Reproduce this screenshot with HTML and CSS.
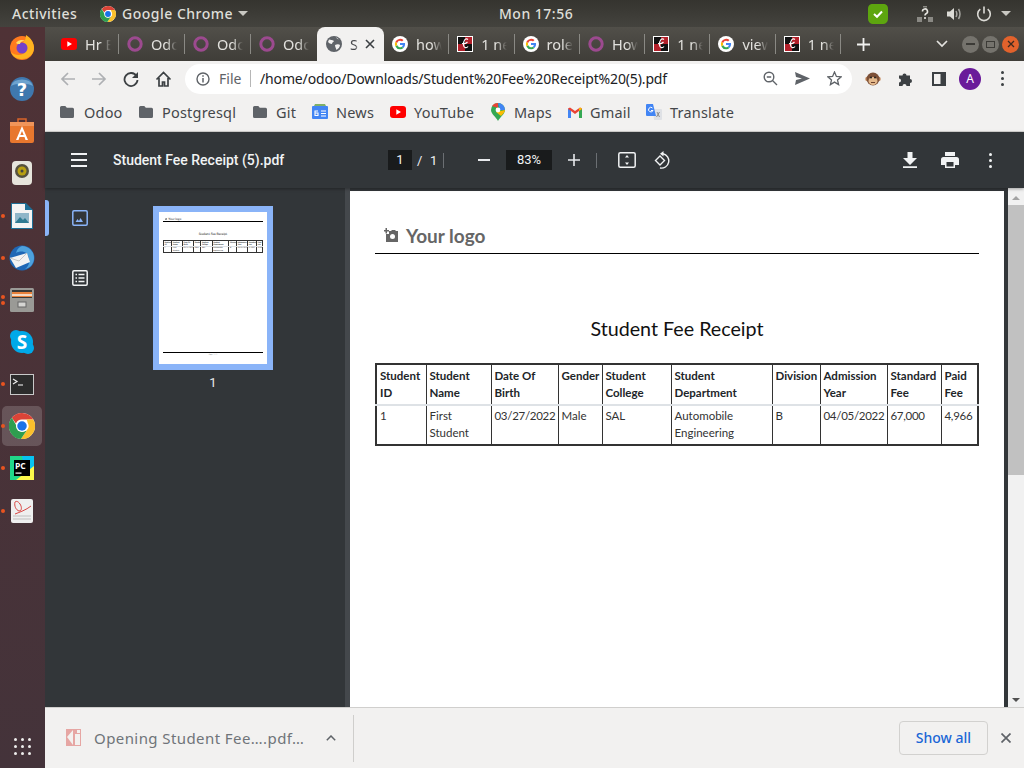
FILE: index.html
```html
<!DOCTYPE html>
<html lang="en">
<head>
<meta charset="utf-8">
<title>Student Fee Receipt (5).pdf</title>
<link rel="stylesheet" href="styles.css">
</head>
<body>
<svg class="defs" width="0" height="0" aria-hidden="true">
  <symbol id="i-chrome" viewBox="0 0 24 24">
    <circle cx="12" cy="12" r="12" fill="#fff"/>
    <path d="M12 0a12 12 0 0 1 10.4 6H12a6 6 0 0 0-5.6 3.8L2.6 4.4A12 12 0 0 1 12 0z" fill="#db4437"/>
    <path d="M22.4 6A12 12 0 0 1 11 24l5.3-7.8A6 6 0 0 0 17.2 9 6 6 0 0 0 16 6z" fill="#fbc02d"/>
    <path d="M11 24A12 12 0 0 1 2.6 4.4l5 8.6a5 5 0 0 0 6 4l2.7-.8z" fill="#2e9e4f"/>
    <circle cx="12" cy="12" r="5.6" fill="#fff"/>
    <circle cx="12" cy="12" r="4.4" fill="#1a73e8"/>
  </symbol>
  <symbol id="i-google" viewBox="0 0 24 24">
    <circle cx="12" cy="12" r="12" fill="#fff"/>
    <path d="M19.6 12.2c0-.6 0-1.100-.2-1.600H12v3h4.300a3.700 3.700 0 0 1-1.600 2.400l2.500 2a7.600 7.600 0 0 0 2.400-5.800z" fill="#4285f4"/>
    <path d="M12 20c2.100 0 3.900-.7 5.200-1.900l-2.500-2a4.700 4.700 0 0 1-7-2.500l-2.600 2A8 8 0 0 0 12 20z" fill="#34a853"/>
    <path d="M7.700 13.600a4.800 4.800 0 0 1 0-3.100l-2.600-2a8 8 0 0 0 0 7.100z" fill="#fbbc05"/>
    <path d="M12 7.200c1.200 0 2.200.4 3 1.200l2.300-2.300A8 8 0 0 0 5.100 8.500l2.600 2A4.800 4.800 0 0 1 12 7.200z" fill="#ea4335"/>
  </symbol>
  <symbol id="i-ring" viewBox="0 0 16 16">
    <circle cx="8" cy="8" r="6.200" fill="none" stroke="#9c4a8f" stroke-width="3"/>
  </symbol>
  <symbol id="i-e" viewBox="0 0 16 16">
    <rect width="16" height="16" fill="#fff"/>
    <rect x="1" y="1" width="7" height="7" fill="#111"/>
    <rect x="8" y="1" width="7" height="7" fill="#b3202a"/>
    <rect x="1" y="8" width="7" height="7" fill="#b3202a"/>
    <rect x="8" y="8" width="7" height="7" fill="#111"/>
    <path d="M11 3.500C8.500 1.500 6 5 6.500 9c.3 3 3 3.500 4.500 1.500M5 7.500c2 .5 4 0 5.500-1.500" fill="none" stroke="#fff" stroke-width="1.200"/>
  </symbol>
  <symbol id="i-folder" viewBox="0 0 14 12">
    <path d="M0 1.500A1.500 1.500 0 0 1 1.500 0h3.800l1.500 1.700h5.700A1.500 1.500 0 0 1 14 3.200v7.300a1.500 1.500 0 0 1-1.500 1.500h-11A1.500 1.500 0 0 1 0 10.500z" fill="#5f6368"/>
  </symbol>
  <symbol id="i-yt" viewBox="0 0 16 12">
    <rect width="16" height="12" rx="3" fill="#f00"/>
    <path d="M6.300 3.300 11 6l-4.700 2.700z" fill="#fff"/>
  </symbol>
  <symbol id="i-camera" viewBox="0 0 15 15">
    <path d="M3 0v2h2v1.500H3v2H1.500v-2H0V2h1.500V0z" fill="#666"/>
    <path d="M5 3h2l1-1h3l1 1h2v11H2V6h3z" fill="#666"/>
    <circle cx="8.500" cy="8.500" r="2.500" fill="#fff"/>
  </symbol>
</svg>

<header class="topbar">
  <span class="top-item activities">Activities</span>
  <svg class="top-chrome" width="16" height="16"><use href="#i-chrome"/></svg>
  <span class="top-item top-app">Google Chrome</span>
  <span class="caret"></span>
  <span class="top-item clock">Mon 17:56</span>
  <svg class="tray-check" width="22" height="22" viewBox="0 0 22 22">
    <path d="M6 1h10c3.500 0 5 1.500 5 5v9c0 4-2 6-6 6H7c-4 0-6-2-6-6V6c0-3.500 1.500-5 5-5z" fill="#5da50f"/>
    <path d="m7 11 3 2.800 5-5.300" fill="none" stroke="#fff" stroke-width="2"/>
  </svg>
  <svg class="tray-net" width="16" height="16" viewBox="0 0 16 16">
    <path d="M6 0h4v1.500H6zM0 11h5v5H0zM11 11h5v5h-5z" fill="#8a8984"/>
    <path d="M5.500 5.500A2.500 2.500 0 1 1 9 7.700c-.7.400-1 .8-1 1.800M8 11v2" fill="none" stroke="#e9e8e3" stroke-width="1.600"/>
  </svg>
  <svg class="tray-vol" width="16" height="16" viewBox="0 0 16 16">
    <path d="M1 5.500h3L8 2v12l-4-3.500H1z" fill="#dcdbd6"/>
    <path d="M10 5c1 1.800 1 4.200 0 6M12.500 3c1.800 3 1.800 7 0 10" fill="none" stroke="#a5a49f" stroke-width="1.500"/>
  </svg>
  <svg class="tray-power" width="16" height="16" viewBox="0 0 16 16">
    <path d="M4.300 3.200a6.300 6.300 0 1 0 7.400 0M8 .5v7" fill="none" stroke="#dcdbd6" stroke-width="1.600"/>
  </svg>
  <span class="caret caret-end"></span>
</header>

<div class="desktop">
  <nav class="dock">
    <div class="dock-item">
      <svg width="26" height="26" viewBox="0 0 26 26">
        <circle cx="13" cy="14" r="12" fill="#ff7a1f"/>
        <path d="M17 1c5 3 8 8 8 13 0 6-5 11-12 11-5 0-9-2-11-7 4 4 12 4 15-1 1-3 0-6-3-8 2-2 3-5 3-8z" fill="#ffb420"/>
        <circle cx="13" cy="14" r="5.500" fill="#7542c9"/>
        <path d="M7 9c2-3 6-4 9-2-3 0-5 1-5 3-2 0-3 0-4-1z" fill="#ffdf6a"/>
      </svg>
    </div>
    <div class="dock-item">
      <svg width="26" height="26" viewBox="0 0 26 26">
        <circle cx="13" cy="13" r="12" fill="#3f78ae"/>
        <path d="M2 10a11.500 9 0 0 1 22 0c-5-3-17-3-22 0z" fill="#6ea3cf"/>
        <text x="13" y="20" class="help-mark">?</text>
      </svg>
    </div>
    <div class="dock-item">
      <svg width="26" height="26" viewBox="0 0 26 26">
        <path d="M9 4V1h8v3" fill="none" stroke="#d9642a" stroke-width="1.500"/>
        <rect x="1" y="4" width="24" height="21" rx="2" fill="#e8772e"/>
        <rect x="1" y="4" width="24" height="4" fill="#f0955a"/>
        <path d="M13 8 7 22h2.500l1-3h5l1 3H19zm0 5 1.700 4h-3.400z" fill="#fff"/>
      </svg>
    </div>
    <div class="dock-item">
      <svg width="24" height="26" viewBox="0 0 24 26">
        <rect x="2" y="1" width="20" height="24" rx="4" fill="#e6e4dc"/>
        <circle cx="12" cy="11" r="7" fill="#55513f"/>
        <circle cx="12" cy="11" r="4.500" fill="#b89f12"/>
        <circle cx="12" cy="11" r="1.500" fill="#444"/>
      </svg>
    </div>
    <div class="dock-item has-dot">
      <svg width="22" height="26" viewBox="0 0 22 26">
        <path d="M0 0h15l7 7v19H0z" fill="#1e6f96"/>
        <path d="M1 1h13v6h7v18H1z" fill="#f4f4f4"/>
        <rect x="4" y="10" width="14" height="10" fill="#8fb6c9"/>
        <path d="m4 20 5-6 3 3 2-2 4 5z" fill="#2f7a92"/>
      </svg>
    </div>
    <div class="dock-item has-dot">
      <svg width="26" height="26" viewBox="0 0 26 26">
        <circle cx="13" cy="13" r="12.500" fill="#1f67b5"/>
        <path d="M13 1a12 12 0 0 1 12 12c0 6-4 10-9 11 5-3 6-11 1-16-2-2-7-2-10 0 1-4 3-6 6-7z" fill="#4ea1dc"/>
        <path d="m1 13 17-5 3 9-14 6z" fill="#f3f3f3"/>
        <path d="m1 13 9 3 8-8" fill="none" stroke="#c6c6c6"/>
      </svg>
    </div>
    <div class="dock-item has-dots">
      <svg width="24" height="26" viewBox="0 0 24 26">
        <rect x="0" y="1" width="24" height="24" rx="1.500" fill="#9a9a96"/>
        <rect x="2" y="3" width="20" height="8" fill="#3a3a38"/>
        <rect x="2" y="5" width="20" height="5" fill="#e8813b"/>
        <rect x="2" y="7" width="20" height="2" fill="#f5d9c2"/>
        <rect x="8" y="15" width="8" height="5" fill="#d5d5d2" stroke="#666"/>
      </svg>
    </div>
    <div class="dock-item">
      <svg width="26" height="26" viewBox="0 0 26 26">
        <circle cx="13" cy="13" r="11" fill="#00a9e8"/>
        <circle cx="7" cy="7" r="6" fill="#00a9e8"/>
        <circle cx="19" cy="19" r="6" fill="#00a9e8"/>
        <text x="13" y="20" class="skype-mark">S</text>
      </svg>
    </div>
    <div class="dock-item has-dot">
      <svg width="24" height="21" viewBox="0 0 24 21">
        <rect x=".5" y=".5" width="23" height="20" fill="#2c2c2c" stroke="#c9c9c9"/>
        <path d="m3 5 4 2.500L3 10" fill="none" stroke="#eee" stroke-width="1.200"/>
        <path d="M8 11h5" stroke="#ddd" stroke-width="1.200"/>
      </svg>
    </div>
    <div class="dock-item has-dot is-active">
      <svg width="26" height="26"><use href="#i-chrome"/></svg>
    </div>
    <div class="dock-item has-dot">
      <svg width="24" height="24" viewBox="0 0 24 24">
        <path d="M0 0h24v24H0z" fill="#21d789"/>
        <path d="M12 0h12v24H16z" fill="#07c3f2"/>
        <path d="M24 10v14H6z" fill="#fcf84a"/>
        <rect x="4" y="4" width="16" height="16" fill="#000"/>
        <text x="5" y="13" class="pc-mark">PC</text>
        <rect x="5.500" y="16.500" width="6" height="1.200" fill="#fff"/>
      </svg>
    </div>
    <div class="dock-item has-dot">
      <svg width="22" height="24" viewBox="0 0 22 24">
        <rect width="22" height="24" rx="2" fill="#efefef"/>
        <path d="M4 3c-1 4 1 8 4 9 3 0 3-4 1-7C7 2 5 2 4 3zM4 15c5-2 11-4 16-8" fill="none" stroke="#d5322f" stroke-width=".9"/>
        <path d="M2 17h18M2 20h18" stroke="#d0d0d0" stroke-width="1.500"/>
      </svg>
    </div>
    <div class="dock-apps">
      <span></span><span></span><span></span><span></span><span></span><span></span><span></span><span></span><span></span>
    </div>
  </nav>

  <div class="window">
    <div class="tabstrip">
      <div class="tab"><svg width="16" height="12"><use href="#i-yt"/></svg><span class="tab-title">Hr Ex</span></div>
      <div class="tab"><svg width="16" height="16"><use href="#i-ring"/></svg><span class="tab-title">Odoo</span></div>
      <div class="tab"><svg width="16" height="16"><use href="#i-ring"/></svg><span class="tab-title">Odoo</span></div>
      <div class="tab no-sep"><svg width="16" height="16"><use href="#i-ring"/></svg><span class="tab-title">Odoo</span></div>
      <div class="tab tab-active">
        <svg width="16" height="16" viewBox="0 0 16 16">
          <circle cx="8" cy="8" r="8" fill="#5f6368"/>
          <path d="M3 3.500c2 .5 3 0 5 1.500-.5 1.500-2 1-2 3-1.500 0-3-1-4-2zM10 1c1 1.500 1 2 3 2.500M9 9c2-1 4-1 5 0 0 2-2 4-3.500 5C10 12 9 11 9 9z" fill="#f2f1f0"/>
        </svg>
        <span class="tab-title tab-title-active">St</span>
        <svg class="tab-close" width="10" height="10" viewBox="0 0 10 10"><path d="m1 1 8 8M9 1 1 9" stroke="#3c4043" stroke-width="1.600"/></svg>
      </div>
      <div class="tab"><svg width="16" height="16"><use href="#i-google"/></svg><span class="tab-title">how t</span></div>
      <div class="tab"><svg width="16" height="16"><use href="#i-e"/></svg><span class="tab-title">1 new</span></div>
      <div class="tab"><svg width="16" height="16"><use href="#i-google"/></svg><span class="tab-title">role b</span></div>
      <div class="tab"><svg width="16" height="16"><use href="#i-ring"/></svg><span class="tab-title">How t</span></div>
      <div class="tab"><svg width="16" height="16"><use href="#i-e"/></svg><span class="tab-title">1 new</span></div>
      <div class="tab"><svg width="16" height="16"><use href="#i-google"/></svg><span class="tab-title">view</span></div>
      <div class="tab"><svg width="16" height="16"><use href="#i-e"/></svg><span class="tab-title">1 new</span></div>
      <svg class="new-tab" width="13" height="13" viewBox="0 0 13 13"><path d="M6.500 0v13M0 6.500h13" stroke="#f1f1ef" stroke-width="1.800"/></svg>
      <svg class="tab-list" width="12" height="8" viewBox="0 0 12 8"><path d="m1 1 5 5 5-5" fill="none" stroke="#e4e3df" stroke-width="1.700"/></svg>
      <div class="win-buttons">
        <span class="win-btn"><i class="win-min"></i></span>
        <span class="win-btn"><i class="win-max"></i></span>
        <span class="win-btn win-close">
          <svg width="8" height="8" viewBox="0 0 8 8"><path d="m1 1 6 6M7 1 1 7" stroke="#3c2a20" stroke-width="1.300"/></svg>
        </span>
      </div>
    </div>

    <div class="toolbar">
      <svg class="nav-btn" width="16" height="16" viewBox="0 0 16 16"><path d="M15 8H2M8 2 2 8l6 6" fill="none" stroke="#aeb0b3" stroke-width="1.700"/></svg>
      <svg class="nav-btn" width="16" height="16" viewBox="0 0 16 16"><path d="M1 8h13M8 2l6 6-6 6" fill="none" stroke="#aeb0b3" stroke-width="1.700"/></svg>
      <svg class="nav-btn" width="16" height="16" viewBox="0 0 16 16"><path d="M13.500 5A6.500 6.500 0 1 0 14.500 9" fill="none" stroke="#3c4043" stroke-width="1.800"/><path d="M15 1v6H9z" fill="#3c4043"/></svg>
      <svg class="nav-btn" width="17" height="16" viewBox="0 0 17 16"><path d="M1.500 8.500 8.500 1.500l7 7M4 7v8h3.500v-4h2v4H13V7" fill="none" stroke="#3c4043" stroke-width="1.700"/></svg>
      <div class="omnibox">
        <svg class="omni-info" width="14" height="14" viewBox="0 0 14 14"><circle cx="7" cy="7" r="6" fill="none" stroke="#5f6368" stroke-width="1.400"/><path d="M7 6v4.500M7 3.300v1.500" stroke="#5f6368" stroke-width="1.500"/></svg>
        <span class="omni-scheme">File</span>
        <span class="omni-sep"></span>
        <span class="omni-url">/home/odoo/Downloads/Student%20Fee%20Receipt%20(5).pdf</span>
        <svg class="omni-zoom" width="15" height="15" viewBox="0 0 15 15"><circle cx="6" cy="6" r="4.800" fill="none" stroke="#5f6368" stroke-width="1.400"/><path d="m9.500 9.500 4.500 4.500M3.800 6h4.400" stroke="#5f6368" stroke-width="1.400"/></svg>
        <svg class="omni-send" width="15" height="13" viewBox="0 0 15 13"><path d="M0 0 15 6.500 0 13l1-5 6-1.500L1 5z" fill="#5f6368"/></svg>
        <svg class="omni-star" width="15" height="15" viewBox="0 0 15 15"><path d="m7.500 1 1.900 4.400 4.700.4-3.600 3.100 1.100 4.700-4.100-2.500-4.100 2.500 1.100-4.700L.9 5.800l4.700-.4z" fill="none" stroke="#5f6368" stroke-width="1.300"/></svg>
      </div>
      <svg class="ext-monkey" width="16" height="16" viewBox="0 0 16 16">
        <circle cx="2.500" cy="8" r="2.300" fill="#c98f62"/><circle cx="13.500" cy="8" r="2.300" fill="#c98f62"/>
        <circle cx="8" cy="8" r="6.500" fill="#7c5038"/>
        <ellipse cx="8" cy="10" rx="4.500" ry="4" fill="#e3b88b"/>
        <circle cx="6" cy="6.500" r="1" fill="#222"/><circle cx="10" cy="6.500" r="1" fill="#222"/>
        <path d="M6 11.500h4" stroke="#6b412c"/>
      </svg>
      <svg class="ext-puzzle" width="16" height="16" viewBox="0 0 16 16"><path d="M1 4.500h3.500a2 2 0 1 1 4 0H12V8a2 2 0 1 1 0 4v3H8.500a2 2 0 1 0-4 0H1v-3.500a2 2 0 1 0 0-4z" fill="#3c4043"/></svg>
      <svg class="ext-side" width="14" height="14" viewBox="0 0 14 14"><path d="M0 0h14v14H0z" fill="#3c4043"/><rect x="2" y="2" width="6.500" height="10" fill="#f2f1f0"/></svg>
      <span class="avatar">A</span>
      <span class="menu-dots"><i></i><i></i><i></i></span>
    </div>

    <div class="bookmarks">
      <span class="bm bm-odoo"><svg width="14" height="12"><use href="#i-folder"/></svg>Odoo</span>
      <span class="bm bm-pg"><svg width="14" height="12"><use href="#i-folder"/></svg>Postgresql</span>
      <span class="bm bm-git"><svg width="14" height="12"><use href="#i-folder"/></svg>Git</span>
      <span class="bm bm-news">
        <svg width="16" height="16" viewBox="0 0 16 16"><rect y="2" width="16" height="13" rx="1" fill="#4285f4"/><path d="M2 2 3 0h10l1 2z" fill="#7fb069"/><path d="M9 7h5M9 9.500h5M9 12h5M3 9h3v2.500H3V7h3" fill="none" stroke="#fff" stroke-width="1.100"/></svg>News</span>
      <span class="bm bm-yt"><svg width="16" height="12"><use href="#i-yt"/></svg>YouTube</span>
      <span class="bm bm-maps">
        <svg width="14" height="18" viewBox="0 0 14 18"><path d="M7 0a7 7 0 0 1 7 7c0 4-5 7-7 11-2-4-7-7-7-11a7 7 0 0 1 7-7z" fill="#34a853"/><path d="M1 3a7 7 0 0 1 6-3v5z" fill="#ea4335"/><path d="M7 0a7 7 0 0 1 7 7H9z" fill="#4285f4"/><path d="M14 7c0 2-2 4-4 6L5 9z" fill="#fbbc04"/><circle cx="7" cy="7" r="2.400" fill="#fff"/></svg>Maps</span>
      <span class="bm bm-gmail">
        <svg width="14" height="11" viewBox="0 0 14 11"><path d="M0 1.500V11h3V4l4 3 4-3v7h3V1.500L12 .5 7 4 2 .5z" fill="#ea4335"/><path d="M0 2v9h3V4z" fill="#4285f4"/><path d="M14 2v9h-3V4z" fill="#34a853"/><path d="m11 1.500 1.500-1L14 2l-3 2z" fill="#fbbc04"/></svg>Gmail</span>
      <span class="bm bm-tr">
        <svg width="16" height="16" viewBox="0 0 16 16"><path d="M7 5h8a1 1 0 0 1 1 1v9a1 1 0 0 1-1 1H8z" fill="#dfe1e5"/><path d="M1 0h6l3 12H1a1 1 0 0 1-1-1V1a1 1 0 0 1 1-1z" fill="#4285f4"/><path d="M6.500 4a2.300 2.300 0 1 0 .5 2.500H5" fill="none" stroke="#fff"/><path d="m11 8 2.500 5M13.500 8l-3 5" stroke="#777" stroke-width=".8"/></svg>Translate</span>
    </div>

    <div class="viewer">
      <div class="pdf-bar">
        <div class="pdf-left">
          <span class="hamburger"><i></i><i></i><i></i></span>
          <span class="pdf-title">Student Fee Receipt (5).pdf</span>
        </div>
        <span class="page-input">1</span>
        <span class="page-slash">/</span>
        <span class="page-total">1</span>
        <span class="pdf-sep"></span>
        <svg class="pdf-minus" width="12" height="2" viewBox="0 0 12 2"><rect width="12" height="2" fill="#e8eaed"/></svg>
        <span class="zoom-input">83%</span>
        <svg class="pdf-plus" width="12" height="12" viewBox="0 0 12 12"><path d="M6 0v12M0 6h12" stroke="#e8eaed" stroke-width="1.600"/></svg>
        <span class="pdf-sep pdf-sep-2"></span>
        <svg class="pdf-fit" width="18" height="16" viewBox="0 0 18 16"><rect x=".8" y=".8" width="16.400" height="14.400" rx="1.500" fill="none" stroke="#f1f3f4" stroke-width="1.500"/><path d="m9 3 2 2.500H7zM9 13l-2-2.500h4z" fill="#f1f3f4"/></svg>
        <svg class="pdf-rotate" width="18" height="18" viewBox="0 0 18 18"><path d="m1.500 9.500 4.500-4.500 4.500 4.500-4.500 4.500z" fill="none" stroke="#f1f3f4" stroke-width="1.400"/><path d="M6 17a7.200 7.200 0 1 0 3-14.200H7.500" fill="none" stroke="#f1f3f4" stroke-width="1.400"/><path d="M9.500 0 6 2.800l3.500 2.800z" fill="#f1f3f4"/></svg>
        <svg class="pdf-download" width="14" height="16" viewBox="0 0 14 16"><path d="M4.500 0h5v6H14l-7 7-7-7h4.500zM0 14.300h14V16H0z" fill="#f1f3f4"/></svg>
        <svg class="pdf-print" width="18" height="16" viewBox="0 0 18 16"><path d="M4 0h10v4H4zM2.500 5h13A2.500 2.500 0 0 1 18 7.500V13h-4v3H4v-3H0V7.500A2.500 2.500 0 0 1 2.500 5z" fill="#f1f3f4"/><rect x="5.500" y="10" width="7" height="4.500" fill="#323639"/></svg>
        <span class="menu-dots menu-dots-light"><i></i><i></i><i></i></span>
      </div>
      <div class="pdf-body">
        <aside class="sidebar">
          <div class="side-tabs">
            <span class="side-indicator"></span>
            <svg class="side-thumb-icon" width="16" height="16" viewBox="0 0 16 16"><rect x=".8" y=".8" width="14.400" height="14.400" rx="1.200" fill="none" stroke="#8ab4f8" stroke-width="1.500"/><path d="m3.500 12 2-3 1.500 2 1.500-3 2.500 4z" fill="#8ab4f8"/></svg>
            <svg class="side-list-icon" width="16" height="16" viewBox="0 0 16 16"><rect x=".8" y=".8" width="14.400" height="14.400" rx="1.200" fill="none" stroke="#f1f3f4" stroke-width="1.500"/><path d="M6.500 4.500h6M6.500 8h6M6.500 11.500h6M3.500 4.500h1.500M3.500 8h1.500M3.500 11.500h1.500" stroke="#f1f3f4" stroke-width="1.500"/></svg>
          </div>
          <div class="thumbs">
            <div class="thumb-frame">
              <div class="sheet sheet-mini">
                <div class="sheet-logo"><svg width="15" height="15"><use href="#i-camera"/></svg><span>Your logo</span></div>
                <h1 class="sheet-title">Student Fee Receipt</h1>
                <table class="fee-table">
                  <colgroup><col class="c1"><col class="c2"><col class="c3"><col class="c4"><col class="c5"><col class="c6"><col class="c7"><col class="c8"><col class="c9"><col class="c10"></colgroup>
                  <thead><tr><th>Student<br>ID</th><th>Student<br>Name</th><th>Date Of<br>Birth</th><th>Gender</th><th>Student<br>College</th><th>Student<br>Department</th><th>Division</th><th>Admission<br>Year</th><th>Standard<br>Fee</th><th>Paid<br>Fee</th></tr></thead>
                  <tbody><tr><td>1</td><td>First<br>Student</td><td class="num">03/27/2022</td><td>Male</td><td>SAL</td><td>Automobile<br>Engineering</td><td>B</td><td class="num">04/05/2022</td><td class="num">67,000</td><td class="num">4,966</td></tr></tbody>
                </table>
                <div class="sheet-foot">Page: 1 / 1</div>
              </div>
            </div>
            <span class="thumb-num">1</span>
          </div>
        </aside>
        <span class="side-rule"></span>
        <main class="doc-area">
          <div class="sheet">
            <div class="sheet-logo"><svg width="15" height="15"><use href="#i-camera"/></svg><span>Your logo</span></div>
            <h1 class="sheet-title">Student Fee Receipt</h1>
            <table class="fee-table">
              <colgroup><col class="c1"><col class="c2"><col class="c3"><col class="c4"><col class="c5"><col class="c6"><col class="c7"><col class="c8"><col class="c9"><col class="c10"></colgroup>
              <thead><tr><th>Student<br>ID</th><th>Student<br>Name</th><th>Date Of<br>Birth</th><th>Gender</th><th>Student<br>College</th><th>Student<br>Department</th><th>Division</th><th>Admission<br>Year</th><th>Standard<br>Fee</th><th>Paid<br>Fee</th></tr></thead>
              <tbody><tr><td>1</td><td>First<br>Student</td><td class="num">03/27/2022</td><td>Male</td><td>SAL</td><td>Automobile<br>Engineering</td><td>B</td><td class="num">04/05/2022</td><td class="num">67,000</td><td class="num">4,966</td></tr></tbody>
            </table>
          </div>
        </main>
        <div class="scrollbar">
          <span class="scroll-up"></span>
          <span class="scroll-thumb"></span>
          <span class="scroll-down"></span>
        </div>
      </div>
    </div>

    <footer class="downloads">
      <svg class="dl-file" width="15" height="17" viewBox="0 0 15 17"><path d="M0 0h15v17H0z" fill="#e6a6a3"/><path d="M1 8 7 1v15zM9 5h5v11H9z" fill="#f3f1ef"/><path d="M11 1h3v3h-3z" fill="#f3f1ef"/></svg>
      <span class="dl-name">Opening Student Fee….pdf…</span>
      <svg class="dl-chevron" width="10" height="6" viewBox="0 0 10 6"><path d="m.8 5.200 4.200-4.200 4.200 4.200" fill="none" stroke="#5f6368" stroke-width="1.500"/></svg>
      <span class="dl-sep"></span>
      <span class="dl-show">Show all</span>
      <svg class="dl-close" width="10" height="10" viewBox="0 0 10 10"><path d="m.5.500 9 9M9.500.5l-9 9" stroke="#5f6368" stroke-width="1.700"/></svg>
    </footer>
  </div>
</div>
</body>
</html>
```
FILE: styles.css
```css
* { box-sizing: border-box; }
html, body { margin: 0; height: 100%; }
body {
  width: 1024px;
  height: 768px;
  overflow: hidden;
  display: flex;
  flex-direction: column;
  font-family: "Noto Sans", sans-serif;
  background: #323639;
}
.defs { position: absolute; }
svg { display: block; flex: none; }

/* GNOME top bar */
.topbar {
  height: 27px;
  flex: none;
  display: flex;
  align-items: center;
  padding-left: 12px;
  background: linear-gradient(#35342f, #44433e);
  color: #dfdfd9;
  font-size: 14px;
  font-weight: 500;
}
.top-item { white-space: nowrap; letter-spacing: .5px; flex: none; }
.activities { width: 68px; margin-right: 20px; }
.top-chrome { margin-right: 6px; }
.top-app { width: 110px; }
.caret {
  width: 0;
  height: 0;
  margin-left: 6px;
  border-left: 5px solid transparent;
  border-right: 5px solid transparent;
  border-top: 5px solid #c9c8c2;
}
.clock { margin-left: 251px; width: 72px; }
.tray-check { margin-left: 296px; }
.tray-net { margin-left: 28px; }
.tray-vol { margin-left: 13px; }
.tray-power { margin-left: 14px; }
.caret-end { margin-left: 9px; }

/* Dock */
.desktop { flex: 1; display: flex; min-height: 0; }
.dock {
  width: 45px;
  flex: none;
  display: flex;
  flex-direction: column;
  align-items: flex-start;
  padding-left: 2px;
  background: linear-gradient(#4f3236, #44333a);
}
.dock-item {
  width: 40px;
  height: 40px;
  margin-bottom: 2.150px;
  flex: none;
  display: flex;
  align-items: center;
  justify-content: center;
  position: relative;
}
.has-dot::before, .has-dots::before, .has-dots::after {
  content: "";
  position: absolute;
  left: -1px;
  top: 18px;
  width: 4px;
  height: 4px;
  border-radius: 50%;
  background: #e95420;
}
.has-dots::before { top: 15px; }
.has-dots::after { top: 21px; }
.is-active { background: rgba(255,255,255,.17); border-radius: 5px; }
.help-mark { font: 700 18px "DejaVu Sans", sans-serif; fill: #fff; text-anchor: middle; }
.skype-mark { font: 700 19px "Open Sans", sans-serif; fill: #fff; text-anchor: middle; }
.pc-mark { font: 700 8.500px "Open Sans", sans-serif; fill: #fff; }
.dock-apps {
  margin-top: auto;
  margin-bottom: 13px;
  margin-left: 12px;
  width: 17px;
  display: grid;
  grid-template-columns: repeat(3, 3px);
  justify-content: space-between;
  row-gap: 4px;
}
.dock-apps span { width: 3px; height: 3px; border-radius: 50%; background: #eeeeec; }

/* Chrome window */
.window { flex: 1; min-width: 0; display: flex; flex-direction: column; }
.tabstrip {
  height: 34px;
  flex: none;
  display: flex;
  align-items: center;
  padding-left: 8px;
  background: linear-gradient(#514f49, #3f3d38);
}
.tab {
  width: 66px;
  height: 34px;
  flex: none;
  display: flex;
  align-items: center;
  gap: 8px;
  padding-left: 8px;
  position: relative;
  overflow: hidden;
}
.tab::after {
  content: "";
  position: absolute;
  right: 0;
  top: 7px;
  height: 20px;
  width: 1px;
  background: #8a8984;
}
.no-sep::after { display: none; }
.tab-title {
  width: 26px;
  overflow: hidden;
  white-space: nowrap;
  font-size: 14.500px;
  color: #e2e1dd;
  -webkit-mask-image: linear-gradient(90deg, #000 60%, transparent);
  mask-image: linear-gradient(90deg, #000 60%, transparent);
}
.tab-active {
  width: 67px;
  padding-left: 9px;
  background: #f2f1f0;
  border-radius: 8px 8px 0 0;
}
.tab-active ~ .tab { width: 65.300px; }
.tab-active::after { display: none; }
.tab-title-active { color: #45474a; width: 9px; }
.tab-close { margin-left: -2px; }
.new-tab { margin-left: 16px; }
.tab-list { margin-left: 66px; }
.win-buttons { display: flex; gap: 3px; margin-left: 14px; }
.win-btn {
  width: 17px;
  height: 17px;
  border-radius: 50%;
  background: #75736d;
  display: flex;
  align-items: center;
  justify-content: center;
}
.win-min { width: 9px; height: 2px; background: #3c3b37; }
.win-max { width: 9px; height: 7px; border: 1px solid #3c3b37; }
.win-close { background: #e2622c; }

/* Address bar */
.toolbar {
  height: 35px;
  flex: none;
  display: flex;
  align-items: center;
  padding-left: 15px;
  background: #f2f1f0;
}
.nav-btn { margin-right: 16px; }
.nav-btn:nth-child(2) { margin-left: -1px; }
.nav-btn:nth-child(4) { margin-right: 13px; }
.omnibox {
  width: 667px;
  height: 30px;
  flex: none;
  display: flex;
  align-items: center;
  padding-left: 11px;
  border-radius: 15px;
  background: #fff;
  color: #3c4043;
  font-size: 14px;
}
.omni-info { margin-right: 9px; }
.omni-scheme { color: #5f6368; width: 24px; }
.omni-sep { width: 1px; height: 17px; margin: 0 9px 0 7px; background: #b6b6b6; }
.omni-url { width: 499px; white-space: nowrap; color: #202124; letter-spacing: -.14px; }
.omni-zoom { margin-left: 4px; }
.omni-send { margin-left: 17px; }
.omni-star { margin-left: 17px; }
.ext-monkey { margin-left: 13px; }
.ext-puzzle { margin-left: 17px; }
.ext-side { margin-left: 18px; }
.avatar {
  width: 22px;
  height: 22px;
  flex: none;
  margin-left: 13px;
  border-radius: 50%;
  background: #6a1b9a;
  color: #fff;
  font-size: 12px;
  line-height: 22px;
  text-align: center;
}
.menu-dots {
  display: flex;
  flex-direction: column;
  gap: 3px;
  margin-left: 20px;
}
.menu-dots i { width: 3px; height: 3px; border-radius: 50%; background: #3c4043; display: block; }
.menu-dots-light { margin-left: 30px; }
.menu-dots-light i { background: #f1f3f4; }

/* Bookmarks */
.bookmarks {
  height: 36px;
  flex: none;
  display: flex;
  align-items: center;
  padding-left: 15px;
  padding-bottom: 3px;
  background: #f2f1f0;
  border-bottom: 1px solid #d6d5d3;
  font-size: 14.500px;
  color: #45474a;
  letter-spacing: .2px;
}
.bm { display: flex; align-items: center; flex: none; white-space: nowrap; }
.bm-odoo { width: 79px; gap: 10px; }
.bm-pg { width: 114px; gap: 9px; }
.bm-git { width: 59px; gap: 9px; }
.bm-news { width: 78px; gap: 8px; }
.bm-yt { width: 101px; gap: 8px; }
.bm-maps { width: 77px; gap: 9px; }
.bm-gmail { width: 78px; gap: 8px; }
.bm-tr { gap: 8px; }

/* PDF viewer */
.viewer { flex: 1; min-height: 0; display: flex; flex-direction: column; background: #323639; }
.pdf-bar {
  height: 56px;
  flex: none;
  display: flex;
  align-items: center;
  background: #323639;
  box-shadow: 0 1px 3px rgba(0,0,0,.35);
  position: relative;
  z-index: 1;
  color: #f1f3f4;
  font-family: Roboto, sans-serif;
  font-size: 13px;
}
.pdf-left { width: 343px; flex: none; display: flex; align-items: center; padding-left: 26px; }
.hamburger { display: flex; flex-direction: column; gap: 4px; width: 16px; }
.hamburger i { display: block; height: 2px; background: #f1f3f4; }
.pdf-title { margin-left: 26px; font-size: 14px; font-weight: 500; white-space: nowrap; }
.page-input {
  width: 24px;
  height: 20px;
  flex: none;
  background: #191b1c;
  line-height: 20px;
  text-align: center;
}
.page-slash { margin-left: 5px; width: 6px; }
.page-total { margin-left: 7px; width: 6px; }
.pdf-sep { width: 1px; height: 15px; margin-left: 7px; background: #6b6f73; flex: none; }
.pdf-minus { margin-left: 34px; }
.zoom-input {
  width: 46px;
  height: 20px;
  flex: none;
  margin-left: 16px;
  background: #191b1c;
  line-height: 20px;
  text-align: center;
}
.pdf-plus { margin-left: 16px; }
.pdf-sep-2 { margin-left: 16px; }
.pdf-fit { margin-left: 21px; }
.pdf-rotate { margin-left: 18px; }
.pdf-download { margin-left: 231px; }
.pdf-print { margin-left: 24px; }

.pdf-body { flex: 1; min-height: 0; display: flex; }
.sidebar { width: 300px; flex: none; display: flex; background: #323639; }
.side-tabs { width: 108px; flex: none; position: relative; }
.side-indicator {
  position: absolute;
  left: 0;
  top: 12px;
  width: 4px;
  height: 36px;
  background: #8ab4f8;
  border-radius: 0 3px 3px 0;
}
.side-thumb-icon { position: absolute; left: 27px; top: 22px; }
.side-list-icon { position: absolute; left: 27px; top: 82px; }
.thumbs { display: flex; flex-direction: column; align-items: center; width: 120px; padding-top: 18px; }
.thumb-frame { width: 120px; height: 164px; border: 6px solid #8ab4f8; background: #fff; overflow: hidden; }
.thumb-num { margin-top: 5px; color: #e8eaed; font: 13px/16px Roboto, sans-serif; }
.side-rule { width: 5px; flex: none; background: #44484c; }

.doc-area {
  flex: 1;
  min-width: 0;
  padding: 3px 4px 0 0;
  overflow: hidden;
  background: #323639;
}

/* Document sheet */
.sheet {
  width: 654px;
  height: 921px;
  padding: 30px 25px 0;
  background: #fff;
  color: #212529;
  font-family: Lato, sans-serif;
  position: relative;
}
.sheet-mini { zoom: .165; text-rendering: geometricPrecision; }
.sheet-logo {
  height: 33px;
  display: flex;
  align-items: center;
  gap: 7px;
  padding-left: 9px;
  border-bottom: 1px solid #000;
  color: #666;
  font-size: 19px;
  font-weight: 700;
  padding-bottom: 3px;
}
.sheet-title {
  margin: 63px 0 0;
  height: 46px;
  font-size: 19.700px;
  font-weight: 400;
  line-height: 24px;
  color: #111;
  text-align: center;
}
.fee-table {
  width: 602px;
  table-layout: fixed;
  border-collapse: collapse;
  border: 2px solid #333;
  font-size: 11.500px;
  line-height: 17px;
  white-space: nowrap;
}
.fee-table th, .fee-table td {
  padding: 2px 3px 3px;
  border-left: 1px solid #333;
  border-right: 1px solid #333;
  text-align: left;
  vertical-align: top;
}
.fee-table th { font-weight: 700; border-bottom: 2px solid #dee2e6; color: #212529; }
.fee-table td { color: #333; padding-top: 1px; }
.fee-table .num { letter-spacing: -.3px; }
.sheet-mini .fee-table { line-height: 14px; }
.sheet-mini .fee-table th, .sheet-mini .fee-table td { padding-top: 1px; padding-bottom: 0; }
.c1 { width: 50px; }
.c2 { width: 65px; }
.c3 { width: 67px; }
.c4 { width: 44px; }
.c5 { width: 69px; }
.c6 { width: 101px; }
.c7 { width: 48px; }
.c8 { width: 67px; }
.c9 { width: 54px; }
.c10 { width: 37px; }
.sheet-foot {
  position: absolute;
  left: 25px;
  right: 25px;
  top: 848px;
  padding-top: 6px;
  border-top: 1px solid #000;
  color: #777;
  font-size: 11px;
  text-align: center;
}

/* Scrollbar */
.scrollbar { width: 16px; flex: none; display: flex; flex-direction: column; background: #f1f1f1; padding-top: 3px; }
.scroll-up, .scroll-down { width: 16px; height: 14px; flex: none; position: relative; }
.scroll-up::after, .scroll-down::after {
  content: "";
  position: absolute;
  left: 4px;
  border-left: 4px solid transparent;
  border-right: 4px solid transparent;
}
.scroll-up::after { top: 5px; border-bottom: 4px solid #a3a3a3; }
.scroll-down::after { top: 5px; border-top: 4px solid #505050; }
.scroll-thumb { height: 270px; flex: none; background: #c1c1c1; margin-bottom: auto; }

/* Download shelf */
.downloads {
  height: 61px;
  flex: none;
  display: flex;
  align-items: center;
  padding-left: 21px;
  background: #f2f1f0;
  border-top: 1px solid #d0cfcd;
}
.dl-file { margin-top: -2px; }
.dl-name { margin-left: 13px; width: 213px; white-space: nowrap; font-size: 15px; letter-spacing: .42px; color: #6f7479; }
.dl-chevron { margin-left: 19px; }
.dl-sep { width: 1px; height: 47px; margin-left: 17px; background: #cfcecc; }
.dl-show {
  width: 89px;
  height: 34px;
  flex: none;
  margin-left: 545px;
  border: 1px solid #d2d1cf;
  border-radius: 4px;
  color: #1a66d6;
  font-size: 14px;
  font-weight: 500;
  line-height: 32px;
  text-align: center;
}
.dl-close { margin-left: 13px; }
```
